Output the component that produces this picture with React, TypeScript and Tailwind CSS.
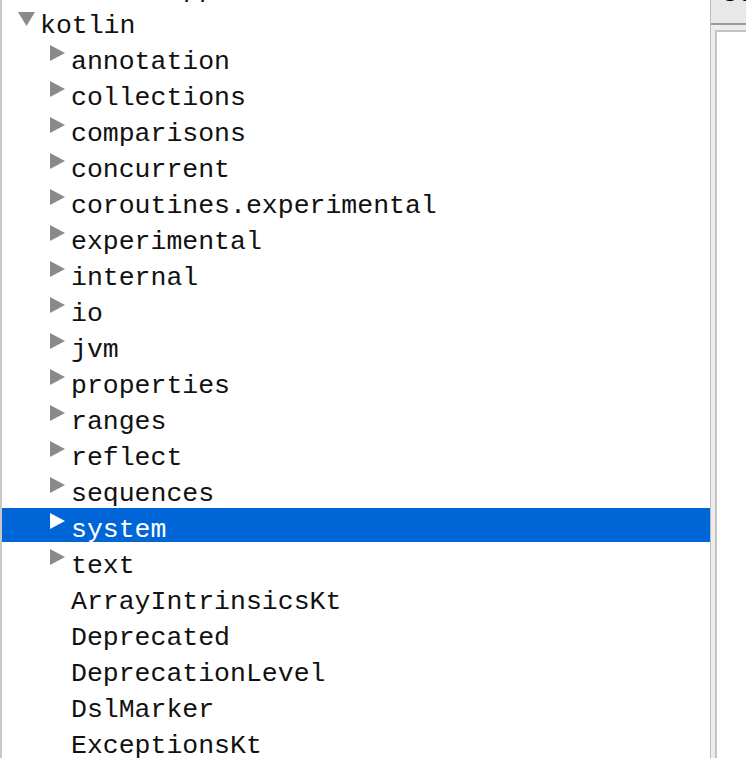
import * as React from 'react';

type Node = {
  label: string;
  level: number;
  kind: 'open' | 'closed' | 'leaf';
  selected?: boolean;
};

const nodes: Node[] = [
  { label: 'kotlin', level: 0, kind: 'open' },
  ...[
    'annotation',
    'collections',
    'comparisons',
    'concurrent',
    'coroutines.experimental',
    'experimental',
    'internal',
    'io',
    'jvm',
    'properties',
    'ranges',
    'reflect',
    'sequences',
    'system',
    'text',
  ].map((label): Node => ({ label, level: 1, kind: 'closed', selected: label === 'system' })),
  ...['ArrayIntrinsicsKt', 'Deprecated', 'DeprecationLevel', 'DslMarker', 'ExceptionsKt'].map(
    (label): Node => ({ label, level: 1, kind: 'leaf' }),
  ),
];

const TreeRow: React.FC<{ node: Node }> = ({ node }) => {
  const { label, level, kind, selected } = node;

  return (
    <div
      className={
        'relative mb-[2px] flex h-[34px] items-center whitespace-nowrap ' +
        (selected ? 'bg-[#0066d8] text-white' : 'text-[#111]')
      }
    >
      {kind === 'open' && (
        <svg className="absolute left-[16px] top-[8px]" width="17" height="14" viewBox="0 0 17 14">
          <polygon points="0,0 17,0 8.5,14" fill="#8a8a8a" />
        </svg>
      )}
      {kind === 'closed' && (
        <svg className="absolute left-[48px] top-[5px]" width="15" height="16" viewBox="0 0 15 16">
          <polygon points="0,0 15,8 0,16" fill={selected ? '#ffffff' : '#8a8a8a'} />
        </svg>
      )}
      <span
        className={'pt-[11px] ' + (level === 0 ? 'pl-[38px]' : 'pl-[69px]')}
        style={{ fontFamily: '"Liberation Mono", "Courier New", monospace', fontSize: '26.5px' }}
      >
        {label}
      </span>
    </div>
  );
};

const App: React.FC = () => {
  return (
    <div className="flex h-[758px] w-[746px] overflow-hidden bg-white">
      <div className="flex-1 overflow-hidden border-l-2 border-[#c8c8c8] pt-[4px]">
        <div className="-mt-[36px]">
          <TreeRow node={{ label: 'kotlin.mapper', level: 0, kind: 'leaf' }} />
        </div>
        {nodes.map((node) => (
          <TreeRow key={node.label} node={node} />
        ))}
      </div>

      <div className="flex w-[36px] shrink-0">
        <div className="w-[8px] border-l border-[#bdbdbd] bg-[#e8e8e8]" />
        <div className="w-[2px] bg-[#9c9c9c]" />
        <div className="flex flex-1 flex-col">
          <div className="h-[23px] overflow-hidden whitespace-nowrap bg-[#e8e8e8] pl-[9px]">
            <div
              className="-mt-[21px] leading-none text-black"
              style={{ fontFamily: '"Liberation Sans", Arial, sans-serif', fontSize: '26px' }}
            >
              Co
            </div>
          </div>
          <div className="h-[2px] bg-[#9c9c9c]" />
          <div className="flex flex-1 flex-col bg-[#ececec] pl-[4px] pt-[5px]">
            <div className="flex-1 border-l-2 border-t-2 border-[#c4c4c4] bg-white" />
          </div>
        </div>
      </div>
    </div>
  );
};

export default App;
